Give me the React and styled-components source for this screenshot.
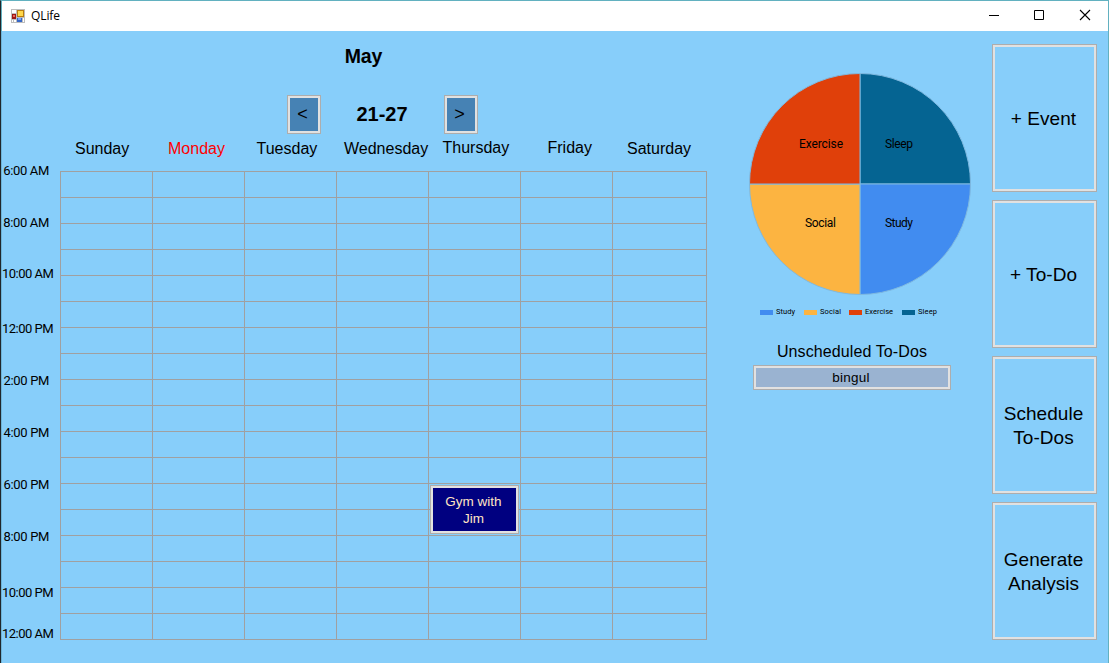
import React from "react";
import styled, { createGlobalStyle } from "styled-components";

const GlobalStyle = createGlobalStyle`
  * { box-sizing: border-box; }
  body { margin: 0; font-family: "Liberation Sans", Arial, sans-serif; color: #000; }
`;

const Window = styled.div`
  display: flex;
  flex-direction: column;
  width: 1109px;
  height: 663px;
  overflow: hidden;
  background: #87cefa;
  border-top: 1px solid #62b1c0;
  border-right: 1px solid #62b1c0;
  border-left: 1px solid #20262b;
`;

const TitleBar = styled.header`
  display: flex;
  align-items: center;
  height: 30px;
  flex: none;
  padding-left: 9px;
  background: #fff;
  border-left: 1px solid #62b1c0;
`;

const Title = styled.span`
  flex: 1;
  margin-left: 6px;
  font: 12px/16px "Open Sans", "Noto Sans", sans-serif;
  letter-spacing: -0.1px;
`;

const Controls = styled.div`
  display: flex;
  align-items: center;
  margin-right: -1px;
  svg { display: block; width: 46px; height: 30px; }
`;

const Body = styled.main`
  display: flex;
  flex: 1;
  min-height: 0;
  border-left: 1px solid #6db4d8;
`;

const Planner = styled.section`
  width: 742px;
  flex: none;
`;

const Month = styled.h1`
  margin: 13px 0 0;
  width: 723px;
  text-align: center;
  font-size: 19.5px;
  line-height: 24px;
  letter-spacing: -0.1px;
`;

const WeekNav = styled.div`
  display: flex;
  align-items: center;
  margin: 27px 0 0 285px;
  height: 39px;
`;

const WeekRange = styled.strong`
  width: 123px;
  padding: 0 1px 2px 0;
  text-align: center;
  font-size: 20px;
  line-height: 24px;
`;

const RaisedButton = styled.button`
  display: flex;
  align-items: center;
  justify-content: center;
  flex: none;
  margin: 0;
  padding: 0;
  border: 1px solid #adadad;
  border-radius: 0;
  box-shadow: inset 0 0 0 2px #e1e1e1;
  background: transparent;
  color: #000;
  font-family: inherit;
  text-align: center;
`;

const NavButton = styled(RaisedButton)`
  width: 34px;
  height: 39px;
  padding-right: 3px;
  background: #4682b4;
  font-size: 18px;
`;

const DayHeader = styled.div`
  display: flex;
  height: 37px;
  padding: 5px 0 0 73px;
`;

const Day = styled.span`
  width: ${(p) => p.$width}px;
  padding-top: ${(p) => p.$drop}px;
  flex: none;
  font-size: 16px;
  line-height: 18px;
  white-space: nowrap;
  color: ${(p) => (p.$today ? "#ff0000" : "#000")};
`;

const Schedule = styled.div`
  display: flex;
  align-items: flex-start;
`;

const Hours = styled.div`
  width: 58px;
  margin-top: -8px;
  flex: none;
`;

const Hour = styled.div`
  height: ${(p) => p.$height}px;
  padding-right: ${(p) => (p.$wide ? 9 : 11)}px;
  text-align: right;
  font: 13px/16px Roboto, sans-serif;
  letter-spacing: ${(p) => (p.$wide ? -0.5 : -0.35)}px;
  white-space: nowrap;
`;

const Grid = styled.div`
  position: relative;
  display: grid;
  grid-template-columns: repeat(6, 92px) 94px;
  grid-auto-rows: 26px;
  border-top: 1px solid #a0a0a0;
  border-left: 1px solid #a0a0a0;
`;

const Cell = styled.div`
  border-right: 1px solid #a0a0a0;
  border-bottom: 1px solid #a0a0a0;
`;

const EventBlock = styled(RaisedButton)`
  position: absolute;
  left: 369px;
  top: 313px;
  width: 89px;
  height: 49px;
  padding: 1px 2px 0 0;
  background: #000080;
  color: #ffe4c4;
  font-size: 13.5px;
  line-height: 17px;
`;

const Summary = styled.section`
  width: 248px;
  flex: none;
`;

const Chart = styled.svg`
  display: block;
  width: 240px;
  height: 290px;
  font-family: Roboto, "Liberation Sans", sans-serif;
`;

const TodoHeading = styled.h2`
  margin: 22px 0 0;
  width: 216px;
  text-align: center;
  font-size: 16px;
  font-weight: normal;
  line-height: 18px;
  letter-spacing: 0.1px;
`;

const TodoItem = styled(RaisedButton)`
  width: 198px;
  height: 25px;
  margin: 4px 0 0 9px;
  padding-right: 2px;
  background: #9ab3d1;
  font-size: 13.5px;
  letter-spacing: 0.25px;
`;

const Actions = styled.nav`
  display: flex;
  flex-direction: column;
  gap: 8px;
  padding-top: 13px;
`;

const ActionButton = styled(RaisedButton)`
  width: 105px;
  height: ${(p) => p.$height}px;
  padding: 2px 2px 0 0;
  font-size: 19px;
  line-height: 24px;
  letter-spacing: 0.05px;
`;

const days = [
  ["Sunday", 93, 1], ["Monday", 88.5, 1, true], ["Tuesday", 87.5, 1], ["Wednesday", 98.5, 1],
  ["Thursday", 105, 0], ["Friday", 79.5, 0], ["Saturday", 70, 1],
];

const hours = [
  ["6:00 AM", 52], ["8:00 AM", 51], ["10:00 AM", 55, true], ["12:00 PM", 52, true], ["2:00 PM", 52],
  ["4:00 PM", 52], ["6:00 PM", 52], ["8:00 PM", 56], ["10:00 PM", 41, true], ["12:00 AM", 16, true],
];

const slices = [
  { name: "Sleep", color: "#056492", d: "M116 153V42.5A110.5 110.5 0 0 1 226.5 153Z", x: 141, y: 117, w: 28 },
  { name: "Study", color: "#418cf0", d: "M116 153H226.5A110.5 110.5 0 0 1 116 263.5Z", x: 141, y: 196, w: 28 },
  { name: "Social", color: "#fcb441", d: "M116 153V263.5A110.5 110.5 0 0 1 5.5 153Z", x: 61, y: 196, w: 31 },
  { name: "Exercise", color: "#e0400a", d: "M116 153H5.5A110.5 110.5 0 0 1 116 42.5Z", x: 55, y: 117, w: 44 },
];

const legend = [
  ["Study", "#418cf0", 16, 32, 19], ["Social", "#fcb441", 60, 76, 21],
  ["Exercise", "#e0400a", 105, 121, 28], ["Sleep", "#056492", 158, 174, 19],
];

function AppIcon() {
  return (
    <svg width="14" height="14" viewBox="0 0 14 14" shapeRendering="crispEdges">
      <rect width="14" height="14" fill="#bdbdbd" />
      <path d="M1 1h4v3H1zM1 11h1v2H1zM3 11h2v2H3zM12 9h1v4h-1z" fill="#fff" />
      <rect x="6" y="1" width="7" height="7" fill="#b97d10" />
      <rect x="7" y="2" width="5" height="5" fill="#ffd84c" />
      <rect x="1" y="5" width="4" height="5" fill="#9c1515" />
      <rect x="2" y="6" width="2" height="2" fill="#ea6a5c" />
      <rect x="6" y="9" width="5" height="4" fill="#3566c8" />
      <rect x="7" y="9" width="3" height="2" fill="#79a5f4" />
    </svg>
  );
}

export default function App() {
  return (
    <>
      <GlobalStyle />
      <Window>
        <TitleBar>
          <AppIcon />
          <Title>QLife</Title>
          <Controls>
            <svg viewBox="0 0 46 30"><path d="M18 14.5h10" stroke="#000" /></svg>
            <svg viewBox="0 0 46 30"><path d="M17.5 9.5h9v9h-9z" fill="none" stroke="#000" /></svg>
            <svg viewBox="0 0 46 30"><path d="M17 9l10 10M27 9l-10 10" stroke="#000" strokeWidth="1.1" /></svg>
          </Controls>
        </TitleBar>
        <Body>
          <Planner>
            <Month>May</Month>
            <WeekNav>
              <NavButton>&lt;</NavButton>
              <WeekRange>21-27</WeekRange>
              <NavButton>&gt;</NavButton>
            </WeekNav>
            <DayHeader>
              {days.map(([name, width, drop, today]) => (
                <Day key={name} $width={width} $drop={drop} $today={today}>{name}</Day>
              ))}
            </DayHeader>
            <Schedule>
              <Hours>
                {hours.map(([label, height, wide]) => (
                  <Hour key={label} $height={height} $wide={wide}>{label}</Hour>
                ))}
              </Hours>
              <Grid>
                {Array.from({ length: 18 * 7 }, (_, i) => <Cell key={i} />)}
                <EventBlock>Gym with<br />Jim</EventBlock>
              </Grid>
            </Schedule>
          </Planner>
          <Summary>
            <Chart viewBox="0 0 240 290">
              {slices.map((s) => (
                <path key={s.name} d={s.d} fill={s.color} stroke="#7fb9e0" strokeWidth="1" />
              ))}
              {slices.map((s) => (
                <text key={s.name} x={s.x} y={s.y} fontSize="12" textLength={s.w}>{s.name}</text>
              ))}
              {legend.map(([name, color, x, tx, w]) => (
                <g key={name}>
                  <rect x={x} y="279" width="13" height="5" fill={color} />
                  <text x={tx} y="283" fontSize="7.5" textLength={w}>{name}</text>
                </g>
              ))}
            </Chart>
            <TodoHeading>Unscheduled To-Dos</TodoHeading>
            <TodoItem>bingul</TodoItem>
          </Summary>
          <Actions>
            <ActionButton $height={148}>+ Event</ActionButton>
            <ActionButton $height={148}>+ To-Do</ActionButton>
            <ActionButton $height={138}>Schedule<br />To-Dos</ActionButton>
            <ActionButton $height={138}>Generate<br />Analysis</ActionButton>
          </Actions>
        </Body>
      </Window>
    </>
  );
}
